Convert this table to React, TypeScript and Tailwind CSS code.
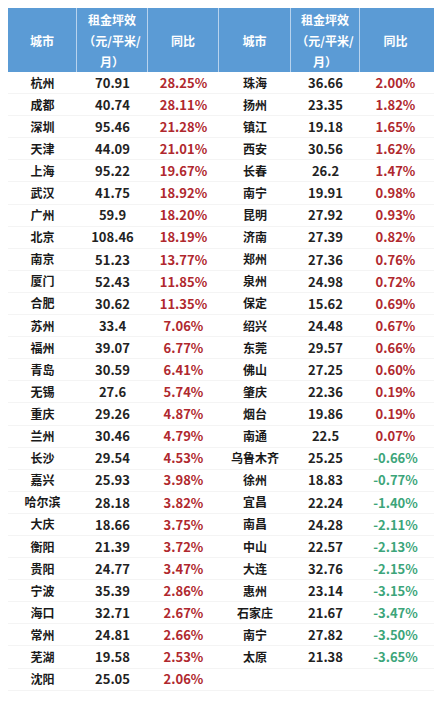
import React from 'react'

type Row = [string, string, string]

const left: Row[] = [
  ['杭州', '70.91', '28.25%'],
  ['成都', '40.74', '28.11%'],
  ['深圳', '95.46', '21.28%'],
  ['天津', '44.09', '21.01%'],
  ['上海', '95.22', '19.67%'],
  ['武汉', '41.75', '18.92%'],
  ['广州', '59.9', '18.20%'],
  ['北京', '108.46', '18.19%'],
  ['南京', '51.23', '13.77%'],
  ['厦门', '52.43', '11.85%'],
  ['合肥', '30.62', '11.35%'],
  ['苏州', '33.4', '7.06%'],
  ['福州', '39.07', '6.77%'],
  ['青岛', '30.59', '6.41%'],
  ['无锡', '27.6', '5.74%'],
  ['重庆', '29.26', '4.87%'],
  ['兰州', '30.46', '4.79%'],
  ['长沙', '29.54', '4.53%'],
  ['嘉兴', '25.93', '3.98%'],
  ['哈尔滨', '28.18', '3.82%'],
  ['大庆', '18.66', '3.75%'],
  ['衡阳', '21.39', '3.72%'],
  ['贵阳', '24.77', '3.47%'],
  ['宁波', '35.39', '2.86%'],
  ['海口', '32.71', '2.67%'],
  ['常州', '24.81', '2.66%'],
  ['芜湖', '19.58', '2.53%'],
  ['沈阳', '25.05', '2.06%'],
]

const right: Row[] = [
  ['珠海', '36.66', '2.00%'],
  ['扬州', '23.35', '1.82%'],
  ['镇江', '19.18', '1.65%'],
  ['西安', '30.56', '1.62%'],
  ['长春', '26.2', '1.47%'],
  ['南宁', '19.91', '0.98%'],
  ['昆明', '27.92', '0.93%'],
  ['济南', '27.39', '0.82%'],
  ['郑州', '27.36', '0.76%'],
  ['泉州', '24.98', '0.72%'],
  ['保定', '15.62', '0.69%'],
  ['绍兴', '24.48', '0.67%'],
  ['东莞', '29.57', '0.66%'],
  ['佛山', '27.25', '0.60%'],
  ['肇庆', '22.36', '0.19%'],
  ['烟台', '19.86', '0.19%'],
  ['南通', '22.5', '0.07%'],
  ['乌鲁木齐', '25.25', '-0.66%'],
  ['徐州', '18.83', '-0.77%'],
  ['宜昌', '22.24', '-1.40%'],
  ['南昌', '24.28', '-2.11%'],
  ['中山', '22.57', '-2.13%'],
  ['大连', '32.76', '-2.15%'],
  ['惠州', '23.14', '-3.15%'],
  ['石家庄', '21.67', '-3.47%'],
  ['南宁', '27.82', '-3.50%'],
  ['太原', '21.38', '-3.65%'],
]

const cols = 'grid grid-cols-[69px_71px_71px_72px_69px_71px]'

function HeaderCell({ children, last }: { children: React.ReactNode; last?: boolean }) {
  return (
    <div
      className={`flex items-center justify-center text-center text-[12px] font-bold leading-[21px] text-white ${
        last ? '' : 'border-r border-[#b8d3ee]'
      }`}
    >
      {children}
    </div>
  )
}

function Cells({ row }: { row?: Row }) {
  if (!row) {
    return (
      <>
        <div />
        <div />
        <div />
      </>
    )
  }
  const neg = row[2].startsWith('-')
  return (
    <>
      <div className="flex items-center justify-center text-[12px] font-bold text-[#1a1a1a]">{row[0]}</div>
      <div className="flex items-center justify-center text-[13px] font-bold text-[#222]">{row[1]}</div>
      <div
        className={`flex items-center justify-center text-[13px] font-bold ${
          neg ? 'text-[#3ca57a]' : 'text-[#b0282e]'
        }`}
      >
        {row[2]}
      </div>
    </>
  )
}

export default function App() {
  return (
    <div className="h-[702px] w-[434px] overflow-hidden bg-white pl-[8px] pt-[8px] font-['Noto_Sans_CJK_SC',sans-serif]">
      <div className={`${cols} h-[64px] bg-[#5b9bd5]`}>
        <HeaderCell>城市</HeaderCell>
        <HeaderCell>
          租金坪效
          <br />
          （元/平米/
          <br />
          月）
        </HeaderCell>
        <HeaderCell>同比</HeaderCell>
        <HeaderCell>城市</HeaderCell>
        <HeaderCell>
          租金坪效
          <br />
          （元/平米/
          <br />
          月）
        </HeaderCell>
        <HeaderCell last>同比</HeaderCell>
      </div>
      <div className="flex flex-col">
        {left.map((r, i) => (
          <div key={i} className={`${cols} h-[22.1px] border-b border-[#f4f4f4]`}>
            <Cells row={r} />
            <Cells row={right[i]} />
          </div>
        ))}
      </div>
    </div>
  )
}
